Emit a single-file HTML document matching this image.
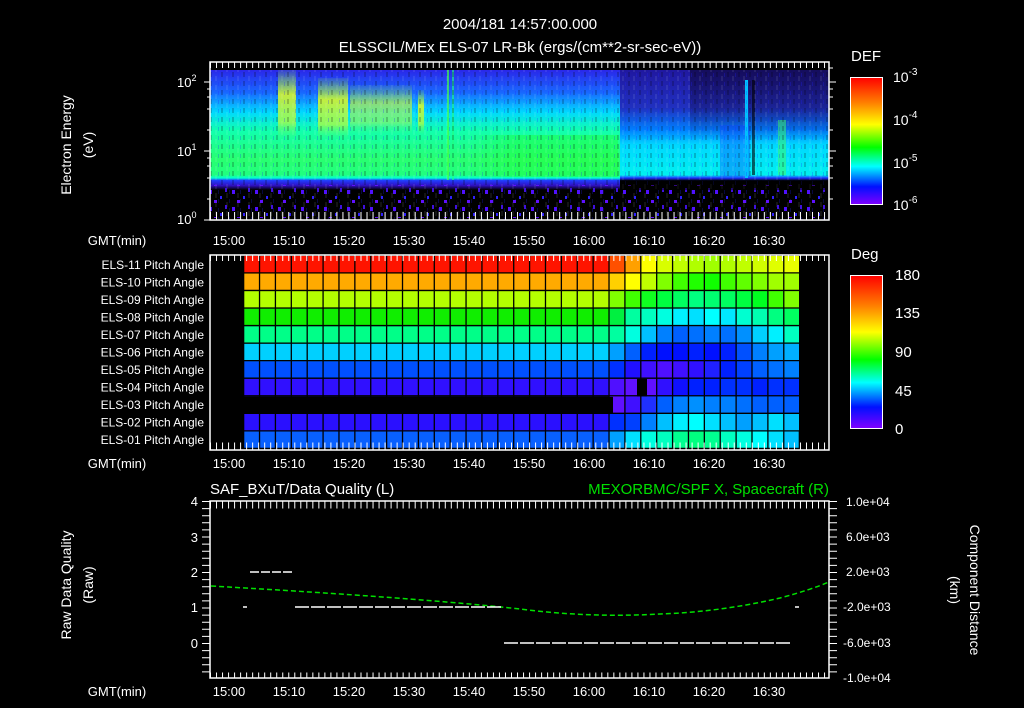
<!DOCTYPE html>
<html><head><meta charset="utf-8"><style>
html,body{margin:0;padding:0;background:#000;width:1024px;height:708px;overflow:hidden}
svg{display:block}
text{font-family:"Liberation Sans",sans-serif;fill:#fff}
</style></head><body>
<svg width="1024" height="708" viewBox="0 0 1024 708" xmlns="http://www.w3.org/2000/svg">
<defs>
<linearGradient id="rb" x1="0" y1="0" x2="0" y2="1">
<stop offset="0" stop-color="#ff0000"/><stop offset="0.2" stop-color="#ff8000"/><stop offset="0.37" stop-color="#ffff00"/><stop offset="0.55" stop-color="#00ff00"/><stop offset="0.7" stop-color="#00ffff"/><stop offset="0.86" stop-color="#0010ff"/><stop offset="1" stop-color="#8000ff"/>
</linearGradient>
<linearGradient id="sl" x1="0" y1="70" x2="0" y2="220" gradientUnits="userSpaceOnUse">
<stop offset="0" stop-color="#2a28e8"/><stop offset="0.15" stop-color="#1868ff"/><stop offset="0.28" stop-color="#00d8ff"/><stop offset="0.4" stop-color="#10ffb0"/><stop offset="0.6" stop-color="#28ff70"/><stop offset="0.7" stop-color="#20ff80"/><stop offset="0.72" stop-color="#00ffd0"/><stop offset="0.735" stop-color="#2040ff"/><stop offset="0.77" stop-color="#3010c0"/><stop offset="0.8" stop-color="#000"/><stop offset="1" stop-color="#000"/>
</linearGradient>
<linearGradient id="sr" x1="0" y1="70" x2="0" y2="220" gradientUnits="userSpaceOnUse">
<stop offset="0" stop-color="#2018a0"/><stop offset="0.25" stop-color="#2030c0"/><stop offset="0.4" stop-color="#0080ff"/><stop offset="0.5" stop-color="#00d8ff"/><stop offset="0.7" stop-color="#00f0f0"/><stop offset="0.72" stop-color="#2030ff"/><stop offset="0.74" stop-color="#000"/><stop offset="1" stop-color="#000"/>
</linearGradient>
<linearGradient id="yb" x1="0" y1="0" x2="0" y2="1">
<stop offset="0" stop-color="#a0ff20" stop-opacity="0.1"/><stop offset="0.35" stop-color="#e0ff20" stop-opacity="0.85"/><stop offset="0.75" stop-color="#c0ff30" stop-opacity="0.7"/><stop offset="1" stop-color="#40ff60" stop-opacity="0"/>
</linearGradient>
<linearGradient id="fadeV" x1="0" y1="0" x2="0" y2="1">
<stop offset="0" stop-color="#fff" stop-opacity="0"/><stop offset="0.3" stop-color="#fff" stop-opacity="1"/><stop offset="0.7" stop-color="#fff" stop-opacity="1"/><stop offset="1" stop-color="#fff" stop-opacity="0"/>
</linearGradient>
<linearGradient id="gb" x1="0" y1="0" x2="1" y2="0">
<stop offset="0" stop-color="#20ff20" stop-opacity="0"/><stop offset="0.3" stop-color="#20ff20" stop-opacity="0.35"/><stop offset="1" stop-color="#20ff20" stop-opacity="0.35"/>
</linearGradient>
<linearGradient id="dk" x1="0" y1="0" x2="0" y2="1">
<stop offset="0" stop-color="#100840" stop-opacity="0.7"/><stop offset="1" stop-color="#100840" stop-opacity="0"/>
</linearGradient>
<pattern id="nz" width="23" height="17" patternUnits="userSpaceOnUse">
<rect x="2" y="3" width="3" height="4" fill="#5010ff"/><rect x="13" y="9" width="2" height="3" fill="#3020ff"/><rect x="7" y="13" width="3" height="3" fill="#6010ff"/><rect x="18" y="1" width="2" height="4" fill="#4010e0"/>
</pattern>
<pattern id="tx" width="11" height="9" patternUnits="userSpaceOnUse">
<rect x="1" y="0" width="2" height="5" fill="#000" opacity="0.2"/><rect x="6" y="4" width="2" height="5" fill="#fff" opacity="0.08"/><rect x="9" y="1" width="1" height="4" fill="#2020ff" opacity="0.25"/>
</pattern>
</defs>

<text x="520" y="29" font-size="15" text-anchor="middle">2004/181 14:57:00.000</text>
<text x="520" y="52" font-size="15" text-anchor="middle">ELSSCIL/MEx ELS-07 LR-Bk  (ergs/(cm**2-sr-sec-eV))</text>

<!-- TOP PANEL -->
<rect x="210" y="70" width="410" height="150" fill="url(#sl)"/>
<rect x="620" y="70" width="209" height="150" fill="url(#sr)"/>
<rect x="690" y="70" width="139" height="70" fill="url(#dk)"/>
<rect x="720" y="125" width="30" height="52" fill="#1040ff" opacity="0.35"/>
<rect x="745" y="80" width="3" height="98" fill="#00c0ff"/>
<rect x="752" y="80" width="3" height="95" fill="#000" opacity="0.6"/>
<rect x="778" y="120" width="8" height="55" fill="#40ff60" opacity="0.5"/>
<rect x="278" y="70" width="18" height="70" fill="url(#yb)"/>
<rect x="318" y="78" width="30" height="62" fill="url(#yb)"/>
<rect x="350" y="85" width="62" height="50" fill="url(#yb)" opacity="0.7"/>
<rect x="418" y="90" width="6" height="45" fill="url(#yb)"/>
<rect x="447" y="70" width="2" height="110" fill="#40ff40" opacity="0.7"/>
<rect x="452" y="70" width="2" height="110" fill="#20ff80" opacity="0.6"/>
<rect x="470" y="135" width="148" height="42" fill="url(#gb)"/>
<rect x="210" y="70" width="619" height="150" fill="url(#tx)"/>
<rect x="210" y="185" width="619" height="33" fill="url(#nz)"/>
<rect x="620" y="180" width="209" height="10" fill="#000" opacity="0.5"/>
<rect x="210" y="62" width="619" height="158" fill="none" stroke="#fff" stroke-width="1.5"/>
<line x1="210" y1="65" x2="829" y2="65" stroke="#fff" stroke-width="6" stroke-dasharray="1 5.02"/>
<line x1="210" y1="216" x2="829" y2="216" stroke="#fff" stroke-width="8" stroke-dasharray="1 5.02"/>
<g stroke="#fff"><line x1="204" y1="82" x2="210" y2="82"/><line x1="204" y1="151" x2="210" y2="151"/><line x1="204" y1="220" x2="210" y2="220"/>
<line x1="207" y1="89" x2="210" y2="89"/><line x1="207" y1="97" x2="210" y2="97"/><line x1="207" y1="109" x2="210" y2="109"/><line x1="207" y1="130" x2="210" y2="130"/><line x1="207" y1="158" x2="210" y2="158"/><line x1="207" y1="166" x2="210" y2="166"/><line x1="207" y1="178" x2="210" y2="178"/><line x1="207" y1="199" x2="210" y2="199"/>
<line x1="829" y1="82" x2="836" y2="82"/><line x1="829" y1="151" x2="836" y2="151"/><line x1="829" y1="89" x2="833" y2="89"/><line x1="829" y1="97" x2="833" y2="97"/><line x1="829" y1="109" x2="833" y2="109"/><line x1="829" y1="130" x2="833" y2="130"/><line x1="829" y1="158" x2="833" y2="158"/><line x1="829" y1="166" x2="833" y2="166"/><line x1="829" y1="178" x2="833" y2="178"/><line x1="829" y1="199" x2="833" y2="199"/><line x1="829" y1="68" x2="833" y2="68"/></g>
<text x="177" y="87" font-size="13">10<tspan font-size="9" dy="-6">2</tspan></text>
<text x="177" y="156" font-size="13">10<tspan font-size="9" dy="-6">1</tspan></text>
<text x="177" y="224" font-size="13">10<tspan font-size="9" dy="-6">0</tspan></text>
<text transform="translate(71,145) rotate(-90)" font-size="14" text-anchor="middle">Electron Energy</text>
<text transform="translate(93,145) rotate(-90)" font-size="14" text-anchor="middle">(eV)</text>

<g font-size="13" text-anchor="middle">
<text x="117" y="245">GMT(min)</text>
<text x="229" y="245">15:00</text><text x="289" y="245">15:10</text><text x="349" y="245">15:20</text><text x="409" y="245">15:30</text><text x="469" y="245">15:40</text><text x="529" y="245">15:50</text><text x="589" y="245">16:00</text><text x="649" y="245">16:10</text><text x="709" y="245">16:20</text><text x="769" y="245">16:30</text>
<text x="117" y="468">GMT(min)</text>
<text x="229" y="468">15:00</text><text x="289" y="468">15:10</text><text x="349" y="468">15:20</text><text x="409" y="468">15:30</text><text x="469" y="468">15:40</text><text x="529" y="468">15:50</text><text x="589" y="468">16:00</text><text x="649" y="468">16:10</text><text x="709" y="468">16:20</text><text x="769" y="468">16:30</text>
<text x="117" y="696">GMT(min)</text>
<text x="229" y="696">15:00</text><text x="289" y="696">15:10</text><text x="349" y="696">15:20</text><text x="409" y="696">15:30</text><text x="469" y="696">15:40</text><text x="529" y="696">15:50</text><text x="589" y="696">16:00</text><text x="649" y="696">16:10</text><text x="709" y="696">16:20</text><text x="769" y="696">16:30</text>
</g>

<text x="851" y="61" font-size="15">DEF</text>
<rect x="850.5" y="77.5" width="32" height="127" fill="url(#rb)" stroke="#fff"/>
<g font-size="14"><text x="893" y="82">10<tspan font-size="10" dy="-7">-3</tspan></text><text x="893" y="125">10<tspan font-size="10" dy="-7">-4</tspan></text><text x="893" y="168">10<tspan font-size="10" dy="-7">-5</tspan></text><text x="893" y="210">10<tspan font-size="10" dy="-7">-6</tspan></text></g>

<!-- MIDDLE PANEL -->
<g>
<rect x="243" y="256" width="366" height="17.55" fill="#ff1400"/>
<rect x="243" y="273.55" width="366" height="17.55" fill="#ffaa00"/>
<rect x="243" y="291.1" width="366" height="17.55" fill="#b4ff00"/>
<rect x="243" y="308.65" width="366" height="17.55" fill="#10ee00"/>
<rect x="243" y="326.2" width="366" height="17.55" fill="#00ff88"/>
<rect x="243" y="343.75" width="366" height="17.55" fill="#00d0ff"/>
<rect x="243" y="361.3" width="366" height="17.55" fill="#0050ff"/>
<rect x="243" y="378.85" width="366" height="17.55" fill="#3010ff"/>
<rect x="243" y="413.95" width="366" height="17.55" fill="#2a10ff"/>
<rect x="243" y="431.5" width="366" height="17.55" fill="#0860ff"/>
</g>
<g transform="translate(609,256)">
<g><rect x="0" width="16" height="18" fill="#ff5000"/><rect x="15.9" width="16" height="18" fill="#ffa000"/><rect x="31.8" width="16" height="18" fill="#ffff00"/><rect x="47.7" width="16" height="18" fill="#d8ff00"/><rect x="63.5" width="16" height="18" fill="#c0ff00"/><rect x="79.4" width="16" height="18" fill="#b0ff00"/><rect x="95.3" width="16" height="18" fill="#a0ff00"/><rect x="111.2" width="16" height="18" fill="#b0ff00"/><rect x="127.1" width="16" height="18" fill="#c0ff00"/><rect x="143" width="16" height="18" fill="#d0ff00"/><rect x="158.9" width="16" height="18" fill="#e0ff00"/><rect x="174.7" width="16" height="18" fill="#e8ff00"/></g>
<g transform="translate(0,17.55)"><rect x="0" width="16" height="18" fill="#ffd000"/><rect x="15.9" width="16" height="18" fill="#ffff00"/><rect x="31.8" width="16" height="18" fill="#c0ff00"/><rect x="47.7" width="16" height="18" fill="#80ff00"/><rect x="63.5" width="16" height="18" fill="#40ff00"/><rect x="79.4" width="16" height="18" fill="#20ff00"/><rect x="95.3" width="16" height="18" fill="#10ff00"/><rect x="111.2" width="16" height="18" fill="#40ff00"/><rect x="127.1" width="16" height="18" fill="#60ff00"/><rect x="143" width="16" height="18" fill="#80ff00"/><rect x="158.9" width="16" height="18" fill="#a0ff00"/><rect x="174.7" width="16" height="18" fill="#a0ff00"/></g>
<g transform="translate(0,35.1)"><rect x="0" width="16" height="18" fill="#80ff00"/><rect x="15.9" width="16" height="18" fill="#40ff00"/><rect x="31.8" width="16" height="18" fill="#10ff20"/><rect x="47.7" width="16" height="18" fill="#00ff40"/><rect x="63.5" width="16" height="18" fill="#00ff60"/><rect x="79.4" width="16" height="18" fill="#00ff80"/><rect x="95.3" width="16" height="18" fill="#00ff70"/><rect x="111.2" width="16" height="18" fill="#00ff60"/><rect x="127.1" width="16" height="18" fill="#00ff40"/><rect x="143" width="16" height="18" fill="#00ff20"/><rect x="158.9" width="16" height="18" fill="#40ff00"/><rect x="174.7" width="16" height="18" fill="#80ff00"/></g>
<g transform="translate(0,52.65)"><rect x="0" width="16" height="18" fill="#00f040"/><rect x="15.9" width="16" height="18" fill="#00ffa0"/><rect x="31.8" width="16" height="18" fill="#00ffc0"/><rect x="47.7" width="16" height="18" fill="#00ffe0"/><rect x="63.5" width="16" height="18" fill="#00f0ff"/><rect x="79.4" width="16" height="18" fill="#00e0ff"/><rect x="95.3" width="16" height="18" fill="#00ffff"/><rect x="111.2" width="16" height="18" fill="#00e8ff"/><rect x="127.1" width="16" height="18" fill="#00ffd0"/><rect x="143" width="16" height="18" fill="#00ffb0"/><rect x="158.9" width="16" height="18" fill="#00ff80"/><rect x="174.7" width="16" height="18" fill="#00ff60"/></g>
<g transform="translate(0,70.2)"><rect x="0" width="16" height="18" fill="#00ffa0"/><rect x="15.9" width="16" height="18" fill="#00ffe0"/><rect x="31.8" width="16" height="18" fill="#00c0ff"/><rect x="47.7" width="16" height="18" fill="#0080ff"/><rect x="63.5" width="16" height="18" fill="#0060ff"/><rect x="79.4" width="16" height="18" fill="#0070ff"/><rect x="95.3" width="16" height="18" fill="#0080ff"/><rect x="111.2" width="16" height="18" fill="#0070ff"/><rect x="127.1" width="16" height="18" fill="#0090ff"/><rect x="143" width="16" height="18" fill="#00d0ff"/><rect x="158.9" width="16" height="18" fill="#00f0ff"/><rect x="174.7" width="16" height="18" fill="#00ffc0"/></g>
<g transform="translate(0,87.75)"><rect x="0" width="16" height="18" fill="#00a0ff"/><rect x="15.9" width="16" height="18" fill="#0060ff"/><rect x="31.8" width="16" height="18" fill="#0020ff"/><rect x="47.7" width="16" height="18" fill="#0010ff"/><rect x="63.5" width="16" height="18" fill="#0010ff"/><rect x="79.4" width="16" height="18" fill="#0020ff"/><rect x="95.3" width="16" height="18" fill="#0010ff"/><rect x="111.2" width="16" height="18" fill="#0020ff"/><rect x="127.1" width="16" height="18" fill="#0050ff"/><rect x="143" width="16" height="18" fill="#0080ff"/><rect x="158.9" width="16" height="18" fill="#00a0ff"/><rect x="174.7" width="16" height="18" fill="#00b0ff"/></g>
<g transform="translate(0,105.3)"><rect x="0" width="16" height="18" fill="#0030ff"/><rect x="15.9" width="16" height="18" fill="#2010ff"/><rect x="31.8" width="16" height="18" fill="#4010ff"/><rect x="47.7" width="16" height="18" fill="#5010ff"/><rect x="63.5" width="16" height="18" fill="#4010ff"/><rect x="79.4" width="16" height="18" fill="#3010ff"/><rect x="95.3" width="16" height="18" fill="#2020ff"/><rect x="111.2" width="16" height="18" fill="#0020ff"/><rect x="127.1" width="16" height="18" fill="#0040ff"/><rect x="143" width="16" height="18" fill="#0060ff"/><rect x="158.9" width="16" height="18" fill="#0070ff"/><rect x="174.7" width="16" height="18" fill="#0080ff"/></g>
<g transform="translate(0,122.85)"><rect x="0" width="16" height="18" fill="#5010ff"/><rect x="15.9" width="16" height="18" fill="#6010ff"/><rect x="31.8" width="16" height="18" fill="#6010ff"/><rect x="28" width="10" height="18" fill="#000"/><rect x="47.7" width="16" height="18" fill="#3010ff"/><rect x="63.5" width="16" height="18" fill="#1010ff"/><rect x="79.4" width="16" height="18" fill="#0020ff"/><rect x="95.3" width="16" height="18" fill="#0020ff"/><rect x="111.2" width="16" height="18" fill="#0030ff"/><rect x="127.1" width="16" height="18" fill="#0030ff"/><rect x="143" width="16" height="18" fill="#0020ff"/><rect x="158.9" width="16" height="18" fill="#0030ff"/><rect x="174.7" width="16" height="18" fill="#0030ff"/></g>
<g transform="translate(0,140.4)"><rect x="4" width="12" height="18" fill="#6010ff"/><rect x="15.9" width="16" height="18" fill="#4010ff"/><rect x="31.8" width="16" height="18" fill="#2030ff"/><rect x="47.7" width="16" height="18" fill="#0060ff"/><rect x="63.5" width="16" height="18" fill="#0080ff"/><rect x="79.4" width="16" height="18" fill="#0090ff"/><rect x="95.3" width="16" height="18" fill="#0080ff"/><rect x="111.2" width="16" height="18" fill="#0080ff"/><rect x="127.1" width="16" height="18" fill="#0070ff"/><rect x="143" width="16" height="18" fill="#0060ff"/><rect x="158.9" width="16" height="18" fill="#0060ff"/><rect x="174.7" width="16" height="18" fill="#0060ff"/></g>
<g transform="translate(0,157.95)"><rect x="0" width="16" height="18" fill="#0030ff"/><rect x="15.9" width="16" height="18" fill="#0040ff"/><rect x="31.8" width="16" height="18" fill="#0080ff"/><rect x="47.7" width="16" height="18" fill="#00c0ff"/><rect x="63.5" width="16" height="18" fill="#00f0ff"/><rect x="79.4" width="16" height="18" fill="#00ffff"/><rect x="95.3" width="16" height="18" fill="#00e0ff"/><rect x="111.2" width="16" height="18" fill="#00c0ff"/><rect x="127.1" width="16" height="18" fill="#00a0ff"/><rect x="143" width="16" height="18" fill="#00c0ff"/><rect x="158.9" width="16" height="18" fill="#00e0ff"/><rect x="174.7" width="16" height="17" fill="#00c0ff"/></g>
<g transform="translate(0,175.5)"><rect x="0" width="16" height="17.5" fill="#00a0ff"/><rect x="15.9" width="16" height="17.5" fill="#00e0ff"/><rect x="31.8" width="16" height="17.5" fill="#00ffe0"/><rect x="47.7" width="16" height="17.5" fill="#00ffc0"/><rect x="63.5" width="16" height="17.5" fill="#00ff90"/><rect x="79.4" width="16" height="17.5" fill="#00ff80"/><rect x="95.3" width="16" height="17.5" fill="#00ff90"/><rect x="111.2" width="16" height="17.5" fill="#00ffc0"/><rect x="127.1" width="16" height="17.5" fill="#00ffe0"/><rect x="143" width="16" height="17.5" fill="#00ffff"/><rect x="158.9" width="16" height="17.5" fill="#00e0ff"/><rect x="174.7" width="15" height="17.5" fill="#00c0ff"/></g>
</g>
<rect x="799" y="256" width="30" height="194" fill="#000"/>
<line x1="243" y1="352.5" x2="800" y2="352.5" stroke="#000" stroke-width="194" stroke-dasharray="1.3 14.586"/>
<line x1="521" y1="256" x2="521" y2="450" stroke="#000" stroke-width="558" stroke-dasharray="1.3 16.25" stroke-dashoffset="-16.25"/>
<rect x="210" y="255" width="619" height="195" fill="none" stroke="#fff" stroke-width="1.5"/>
<line x1="210" y1="258" x2="829" y2="258" stroke="#fff" stroke-width="6" stroke-dasharray="1 5.02"/>
<line x1="210" y1="446" x2="829" y2="446" stroke="#fff" stroke-width="7" stroke-dasharray="1 5.02"/>
<g font-size="12" text-anchor="end">
<text x="204" y="269">ELS-11 Pitch Angle</text><text x="204" y="286.5">ELS-10 Pitch Angle</text><text x="204" y="304">ELS-09 Pitch Angle</text><text x="204" y="321.5">ELS-08 Pitch Angle</text><text x="204" y="339">ELS-07 Pitch Angle</text><text x="204" y="356.5">ELS-06 Pitch Angle</text><text x="204" y="374">ELS-05 Pitch Angle</text><text x="204" y="391.5">ELS-04 Pitch Angle</text><text x="204" y="409">ELS-03 Pitch Angle</text><text x="204" y="426.5">ELS-02 Pitch Angle</text><text x="204" y="444">ELS-01 Pitch Angle</text>
</g>

<text x="851" y="259" font-size="15">Deg</text>
<rect x="850.5" y="275.5" width="32" height="153" fill="url(#rb)" stroke="#fff"/>
<g font-size="15"><text x="895" y="280">180</text><text x="895" y="318">135</text><text x="895" y="357">90</text><text x="895" y="396">45</text><text x="895" y="434">0</text></g>

<!-- BOTTOM PANEL -->
<text x="210" y="494" font-size="15">SAF_BXuT/Data Quality (L)</text>
<text x="829" y="494" font-size="15" text-anchor="end" style="fill:#00e000">MEXORBMC/SPF X, Spacecraft (R)</text>
<rect x="210" y="501" width="619" height="177" fill="none" stroke="#fff" stroke-width="1.5"/>
<line x1="210" y1="505" x2="829" y2="505" stroke="#fff" stroke-width="7" stroke-dasharray="1 5.02"/>
<line x1="210" y1="675" x2="829" y2="675" stroke="#fff" stroke-width="5" stroke-dasharray="1 5.02"/>
<line x1="206" y1="501" x2="206" y2="678" stroke="#fff" stroke-width="8" stroke-dasharray="1 6.1"/>
<line x1="833" y1="501" x2="833" y2="678" stroke="#fff" stroke-width="8" stroke-dasharray="1 6.1"/>
<g font-size="13" text-anchor="end"><text x="198" y="506">4</text><text x="198" y="542">3</text><text x="198" y="577">2</text><text x="198" y="612">1</text><text x="198" y="648">0</text></g>
<g font-size="12"><text x="846" y="506">1.0e+04</text><text x="846" y="541">6.0e+03</text><text x="846" y="576">2.0e+03</text><text x="843" y="611">-2.0e+03</text><text x="843" y="647">-6.0e+03</text><text x="843" y="682">-1.0e+04</text></g>
<text transform="translate(71,585) rotate(-90)" font-size="14" text-anchor="middle">Raw Data Quality</text>
<text transform="translate(93,585) rotate(-90)" font-size="14" text-anchor="middle">(Raw)</text>
<text transform="translate(970,590) rotate(90)" font-size="14" text-anchor="middle">Component Distance</text>
<text transform="translate(950,590) rotate(90)" font-size="14" text-anchor="middle">(km)</text>
<path d="M211,586 Q420,598 520,609 Q590,618 660,614 Q720,612 780,598 Q810,590 829,582" fill="none" stroke="#00e000" stroke-width="1.5" stroke-dasharray="5 3"/>
<g stroke="#fff" stroke-width="1.5">
<line x1="250" y1="572" x2="293" y2="572" stroke-dasharray="9 2"/>
<line x1="243" y1="607" x2="247" y2="607"/>
<line x1="295" y1="607" x2="503" y2="607" stroke-dasharray="14 2"/>
<line x1="504" y1="643" x2="792" y2="643" stroke-dasharray="14 2"/>
<line x1="795" y1="607" x2="799" y2="607"/>
</g>
</svg>
</body></html>
